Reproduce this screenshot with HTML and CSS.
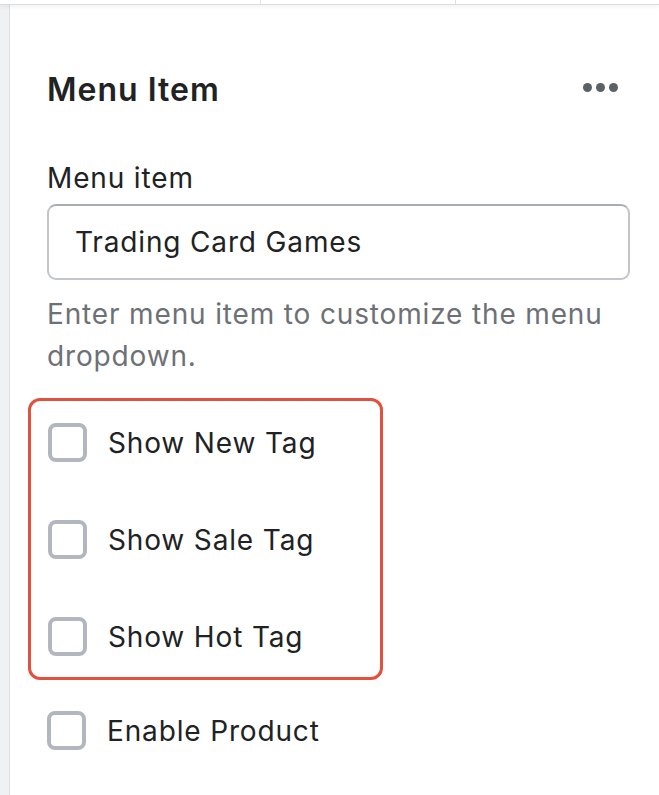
FILE: index.html
```html
<!DOCTYPE html>
<html>
<head>
<meta charset="utf-8">
<link rel="stylesheet" href="styles.css">
</head>
<body>
<div class="topbar">
  <div class="cell"></div>
  <div class="cell sep"></div>
  <div class="cell sep"></div>
</div>
<div class="main">
  <div class="rail"></div>
  <div class="panel">
    <div class="header">
      <h1 class="title">Menu Item</h1>
      <div class="dots" aria-label="More actions"><span></span><span></span><span></span></div>
    </div>
    <label class="field-label">Menu item</label>
    <div class="input">Trading Card Games</div>
    <p class="help">Enter menu item to customize the menu dropdown.</p>
    <div class="highlight">
      <div class="check-row"><span class="box"></span><span class="check-label">Show New Tag</span></div>
      <div class="check-row"><span class="box"></span><span class="check-label">Show Sale Tag</span></div>
      <div class="check-row"><span class="box"></span><span class="check-label">Show Hot Tag</span></div>
    </div>
    <div class="check-row single"><span class="box"></span><span class="check-label">Enable Product</span></div>
  </div>
</div>
</body>
</html>
```

FILE: styles.css
```css
html, body {
  margin: 0;
  padding: 0;
  background: #ffffff;
}
body {
  width: 659px;
  height: 795px;
  overflow: hidden;
  font-family: Inter, "Noto Sans", sans-serif;
  color: #202223;
}
.topbar {
  display: grid;
  grid-template-columns: 260px 195px 1fr;
  height: 4px;
  border-bottom: 1px solid #d9dbde;
  position: relative;
  z-index: 1;
  box-shadow: 0 2px 4px rgba(0, 0, 0, 0.05);
}
.cell.sep {
  border-left: 1px solid #dfe1e4;
}
.main {
  display: flex;
  height: 790px;
}
.rail {
  width: 9px;
  flex: none;
  background: #f0f1f3;
  border-right: 1px solid #dcdee2;
}
.panel {
  flex: 1;
  padding: 65px 29px 0 37px;
}
.header {
  display: flex;
  align-items: center;
  justify-content: space-between;
  height: 40px;
}
.title {
  margin: 0;
  font-size: 32px;
  line-height: 40px;
  font-weight: 600;
  letter-spacing: 1px;
  color: #202223;
}
.dots {
  display: flex;
  gap: 4px;
  margin-right: 12px;
  margin-top: -6px;
}
.dots span {
  width: 9px;
  height: 9px;
  border-radius: 50%;
  background: #5c6166;
}
.field-label {
  display: block;
  margin-top: 48px;
  font-size: 28px;
  line-height: 40px;
  letter-spacing: 0.85px;
  color: #202223;
}
.input {
  margin-top: 6px;
  height: 76px;
  box-sizing: border-box;
  border: 2px solid #c2c6cc;
  border-top-color: #a9aeb5;
  border-radius: 9px;
  padding: 0 26px;
  display: flex;
  align-items: center;
  font-size: 28px;
  letter-spacing: 0.85px;
  color: #202223;
}
.help {
  margin: 13px 0 0 0;
  font-size: 28px;
  line-height: 42px;
  letter-spacing: 0.85px;
  color: #6d7175;
  width: 580px;
}
.highlight {
  margin-top: 21px;
  margin-left: -19px;
  width: 355px;
  box-sizing: border-box;
  border: 3px solid #e2513d;
  border-radius: 12px;
  padding: 22px 17px 21px;
  display: flex;
  flex-direction: column;
  gap: 58px;
}
.check-row {
  display: flex;
  align-items: center;
  height: 39px;
  gap: 21px;
}
.check-row.single {
  margin-top: 31px;
}
.box {
  width: 39px;
  height: 39px;
  box-sizing: border-box;
  border: 4px solid #b2b7bf;
  border-radius: 8px;
  flex: none;
}
.check-label {
  font-size: 28px;
  letter-spacing: 0.85px;
  color: #202223;
}
```
